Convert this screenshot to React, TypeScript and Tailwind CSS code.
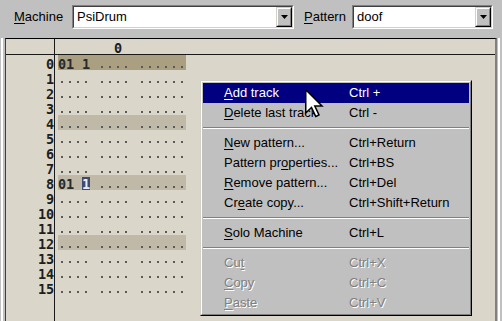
import React from 'react';

const sans = "[font-family:'Liberation_Sans',Arial,sans-serif]";
const mono = "[font-family:'DejaVu_Sans_Mono',monospace]";

type MenuEntry =
  | { label: string; u: number; keys: string; active?: boolean; disabled?: boolean }
  | 'sep';

const menu: MenuEntry[] = [
  { label: 'Add track', u: 0, keys: 'Ctrl +', active: true },
  { label: 'Delete last track', u: 0, keys: 'Ctrl -' },
  'sep',
  { label: 'New pattern...', u: 0, keys: 'Ctrl+Return' },
  { label: 'Pattern properties...', u: 10, keys: 'Ctrl+BS' },
  { label: 'Remove pattern...', u: 0, keys: 'Ctrl+Del' },
  { label: 'Create copy...', u: 2, keys: 'Ctrl+Shift+Return' },
  'sep',
  { label: 'Solo Machine', u: 0, keys: 'Ctrl+L' },
  'sep',
  { label: 'Cut', u: 2, keys: 'Ctrl+X', disabled: true },
  { label: 'Copy', u: 0, keys: 'Ctrl+C', disabled: true },
  { label: 'Paste', u: 0, keys: 'Ctrl+V', disabled: true },
];

// one track, 16 rows; '.' = empty, ' ' = column gap
const EMPTY = '.... .... ......';
const rows: string[] = Array.from({ length: 16 }, (_, i) => {
  if (i === 0) return '01 1 .... ......';
  if (i === 8) return '01 1 .... ......';
  return EMPTY;
});

const Mnemonic = ({ text, u }: { text: string; u: number }) => (
  <>
    {text.slice(0, u)}
    <span className="underline underline-offset-2">{text[u]}</span>
    {text.slice(u + 1)}
  </>
);

const Combo = ({ value, className }: { value: string; className: string }) => (
  <div className={`h-[24px] border border-t-[#808080] border-l-[#808080] border-b-white border-r-white ${className}`}>
    <div className="flex h-full border border-t-[#404040] border-l-[#404040] border-b-[#d4d0c8] border-r-[#d4d0c8] bg-white">
      <span className="flex-1 pl-[3px] text-[13px] leading-[20px] text-black">{value}</span>
      <div className="w-[16px] border border-t-[#d4d0c8] border-l-[#d4d0c8] border-b-black border-r-black">
        <div className="flex h-full items-center justify-center border border-t-white border-l-white border-b-[#808080] border-r-[#808080] bg-[#c0c0c0]">
          <svg width="7" height="4" viewBox="0 0 7 4">
            <polygon points="0,0 7,0 3.5,4" fill="#000" />
          </svg>
        </div>
      </div>
    </div>
  </div>
);

const Cell = ({ ch, cursor }: { ch: string; cursor?: boolean }) => {
  if (ch === '.')
    return (
      <span className="flex h-full w-[8px] items-end justify-center pb-[2px]">
        <span className="h-[2px] w-[2px] bg-[#5a5a5a]" />
      </span>
    );
  return (
    <span
      className={`flex h-full w-[8px] justify-center ${cursor ? 'bg-[#3e4b6d] text-[#e8ecff]' : 'text-[#2a2a2a]'}`}
    >
      {ch === ' ' ? '' : ch}
    </span>
  );
};

export default function App() {
  return (
    <div className={`relative flex h-[321px] w-[502px] flex-col overflow-hidden bg-[#c0c0c0] ${sans}`}>
      {/* toolbar */}
      <div className="h-[38px] pt-[5px]">
        <div className="flex h-[24px] items-center text-[13px] text-black">
          <span className="ml-[14px] w-[58px]">
            <Mnemonic text="Machine" u={0} />
          </span>
          <Combo value="PsiDrum" className="w-[222px]" />
          <span className="ml-[10px] w-[48px]">
            <Mnemonic text="Pattern" u={0} />
          </span>
          <Combo value="doof" className="w-[141px]" />
        </div>
      </div>

      {/* pattern editor frame */}
      <div className="flex-1 pl-[1px] pr-[2px]">
        <div className="h-full border-x-2 border-white">
          <div className="h-full pl-[2px] pr-[1px] bg-[#c0c0c0]">
            <div className={`flex h-full border-l border-t border-r-2 border-l-[#404040] border-t-black border-r-[#808080] bg-[#dad6ca] ${mono} text-[13.5px] font-bold`}>
              {/* row numbers */}
              <div className="w-[49px] border-r border-[#1a1a1a]">
                <div className="h-[16px] border-b border-[#1a1a1a]" />
                {rows.map((_, i) => (
                  <div key={i} className="flex h-[15px] justify-end pt-[2px] leading-[15px] text-[#1e1e1e]">
                    {String(i)
                      .split('')
                      .map((d, j) => (
                        <span key={j} className="flex w-[8px] justify-center">
                          {d}
                        </span>
                      ))}
                  </div>
                ))}
              </div>

              {/* track */}
              <div className="flex-1">
                <div className="flex h-[16px] border-b border-[#1a1a1a] pl-[3px] pt-[2px] leading-[15px] text-[#1e1e1e]">
                  <span className="ml-[56px] flex w-[8px] justify-center">0</span>
                </div>
                {rows.map((r, i) => (
                  <div key={i} className="h-[15px] pl-[3px]">
                    <div
                      className={`flex h-full w-[128px] pt-[2px] leading-[15px] ${
                        i === 0 ? 'bg-[#aa9f80]' : i % 4 === 0 ? 'bg-[#c0b9a8]' : ''
                      }`}
                    >
                      {r.split('').map((ch, j) => (
                        <Cell key={j} ch={ch} cursor={i === 8 && j === 3} />
                      ))}
                    </div>
                  </div>
                ))}
              </div>
            </div>
          </div>
        </div>
      </div>

      {/* context menu */}
      <div className="absolute left-[200px] top-[80px] w-[272px] border border-t-[#d4d0c8] border-l-[#d4d0c8] border-b-black border-r-black">
        <div className="border border-t-white border-l-white border-b-[#808080] border-r-[#808080] bg-[#c0c0c0] p-[1px] text-[13px]">
          {menu.map((m, i) =>
            m === 'sep' ? (
              <div key={i} className="flex h-[10px] items-center">
                <div className="h-[2px] w-full border-t border-b border-t-[#808080] border-b-white" />
              </div>
            ) : (
              <div
                key={i}
                className={`flex h-[20px] items-center whitespace-nowrap ${
                  m.active
                    ? 'bg-[#000080] text-white'
                    : m.disabled
                      ? 'text-[#808080] [text-shadow:1px_1px_0_#fff]'
                      : 'text-black'
                }`}
              >
                <span className="w-[146px] pl-[21px]">
                  <Mnemonic text={m.label} u={m.u} />
                </span>
                <span>{m.keys}</span>
              </div>
            ),
          )}
        </div>
      </div>

      {/* mouse pointer */}
      <svg className="absolute left-[305px] top-[89px]" width="19" height="29" viewBox="0 0 19 29">
        <polygon
          points="0.75,0.75 0.75,24 6.5,18.5 10.8,27.5 14,26 9.8,17 17,17"
          fill="#fff"
          stroke="#000"
          strokeWidth="1.5"
          strokeLinejoin="miter"
        />
      </svg>
    </div>
  );
}
